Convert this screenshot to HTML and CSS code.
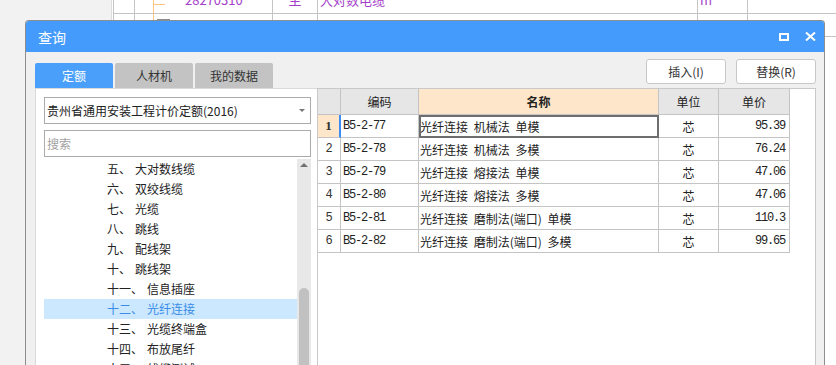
FILE: index.html
```html
<!DOCTYPE html>
<html lang="zh-CN">
<head>
    <meta charset="utf-8">
    <title>查询</title>
    <link rel="stylesheet" href="styles.css">
</head>
<body>
    <!-- 背景：主窗口的清单表格 -->
    <div class="desk">
        <div class="side"></div>
        <div class="sheet">
            <div class="sheet-grid">
                <div class="sc first"></div>
                <div class="sc branch"><span class="line tee"></span><span class="code">28270310</span></div>
                <div class="sc center purple up-row">主</div>
                <div class="sc purple up-row">大对数电缆</div>
                <div class="sc purple up-row">m</div>
                <div class="sc"></div>

                <div class="sc first"></div>
                <div class="sc branch"><span class="line"></span><span class="node"></span></div>
                <div class="sc center low-row">个</div>
                <div class="sc dark low-row">光纤连接盒 安装 壁挂式</div>
                <div class="sc"></div>
                <div class="sc"></div>
            </div>
        </div>
    </div>

    <div class="dialog">
        <div class="titlebar">
            <span class="title">查询</span>
            <div class="ctrls">
                <svg width="10" height="8" viewBox="0 0 10 8"><rect x="1" y="1" width="8" height="6" fill="none" stroke="#fff" stroke-width="2"/></svg>
                <svg width="11" height="9" viewBox="0 0 11 9"><path d="M1 0.5 L10 8.5 M10 0.5 L1 8.5" stroke="#fff" stroke-width="2"/></svg>
            </div>
        </div>

        <div class="dlg-body">
            <div class="toolbar">
                <div class="tabs">
                    <div class="tab active">定额</div>
                    <div class="tab">人材机</div>
                    <div class="tab">我的数据</div>
                </div>
                <div class="actions">
                    <button class="btn">插入(I)</button>
                    <button class="btn">替换(R)</button>
                </div>
            </div>

            <div class="panes">
                <div class="left">
                    <div class="select">
                        <span>贵州省通用安装工程计价定额(2016)</span>
                        <span class="caret"></span>
                    </div>
                    <div class="search">搜索</div>
                    <div class="tree">
                        <ul class="tree-list">
                            <li><span class="num">五、</span>大对数线缆</li>
                            <li><span class="num">六、</span>双绞线缆</li>
                            <li><span class="num">七、</span>光缆</li>
                            <li><span class="num">八、</span>跳线</li>
                            <li><span class="num">九、</span>配线架</li>
                            <li><span class="num">十、</span>跳线架</li>
                            <li><span class="num">十一、</span>信息插座</li>
                            <li class="sel"><span class="num">十二、</span>光纤连接</li>
                            <li><span class="num">十三、</span>光缆终端盒</li>
                            <li><span class="num">十四、</span>布放尾纤</li>
                            <li><span class="num">十五、</span>线缆测试</li>
                        </ul>
                        <div class="scroll">
                            <span class="up"></span>
                            <span class="thumb"></span>
                        </div>
                    </div>
                </div>

                <div class="right">
                    <table class="items">
                        <colgroup>
                            <col class="c-no"><col class="c-code"><col class="c-name"><col class="c-unit"><col class="c-price">
                        </colgroup>
                        <thead>
                            <tr>
                                <th></th>
                                <th>编码</th>
                                <th class="hl">名称</th>
                                <th>单位</th>
                                <th>单价</th>
                            </tr>
                        </thead>
                        <tbody>
                            <tr class="cur">
                                <td class="no">1</td>
                                <td class="code">B5-2-77</td>
                                <td class="name focus">光纤连接 机械法 单模</td>
                                <td class="unit">芯</td>
                                <td class="price">95.39</td>
                            </tr>
                            <tr>
                                <td class="no">2</td>
                                <td class="code">B5-2-78</td>
                                <td class="name">光纤连接 机械法 多模</td>
                                <td class="unit">芯</td>
                                <td class="price">76.24</td>
                            </tr>
                            <tr>
                                <td class="no">3</td>
                                <td class="code">B5-2-79</td>
                                <td class="name">光纤连接 熔接法 单模</td>
                                <td class="unit">芯</td>
                                <td class="price">47.06</td>
                            </tr>
                            <tr>
                                <td class="no">4</td>
                                <td class="code">B5-2-80</td>
                                <td class="name">光纤连接 熔接法 多模</td>
                                <td class="unit">芯</td>
                                <td class="price">47.06</td>
                            </tr>
                            <tr>
                                <td class="no">5</td>
                                <td class="code">B5-2-81</td>
                                <td class="name">光纤连接 磨制法(端口) 单模</td>
                                <td class="unit">芯</td>
                                <td class="price">110.3</td>
                            </tr>
                            <tr>
                                <td class="no">6</td>
                                <td class="code">B5-2-82</td>
                                <td class="name">光纤连接 磨制法(端口) 多模</td>
                                <td class="unit">芯</td>
                                <td class="price">99.65</td>
                            </tr>
                        </tbody>
                    </table>
                </div>
            </div>
        </div>
    </div>
</body>
</html>
```
FILE: styles.css
```css
* {
    box-sizing: border-box;
}

body {
    margin: 0;
    width: 836px;
    height: 365px;
    overflow: hidden;
    position: relative;
    background-color: #ffffff;
    font-family: "Noto Sans CJK SC", sans-serif;
    font-size: 12px;
    color: #222222;
}

/* 背景窗口 */
.desk {
    display: flex;
    height: 365px;
}

.side {
    width: 112px;
    background-color: #f2f2f2;
    border-right: 1px solid #dddddd;
}

.sheet {
    flex: 1;
    overflow: hidden;
    padding-left: 1px;
}

.sheet-grid {
    display: grid;
    grid-template-columns: 22px 138px 45px 380px 50px 200px;
    margin-top: -9px;
}

.sc {
    height: 23px;
    border-right: 1px solid #c4c4c4;
    border-bottom: 1px solid #c4c4c4;
    display: flex;
    align-items: center;
    padding-left: 2px;
    font-size: 13px;
    white-space: nowrap;
    overflow: hidden;
}

.sc.up-row {
    padding-bottom: 6px;
}

.sc.low-row {
    padding-top: 4px;
}

.sc.first {
    border-left: 1px solid #c4c4c4;
}

.sc.center {
    justify-content: center;
    padding-left: 0;
}

.sc.purple,
.sc .code {
    color: #a43fc9;
}

.sc.dark {
    color: #222222;
    padding-left: 15px;
}

.sc.branch {
    padding-left: 18px;
    align-items: stretch;
}

.line {
    width: 12px;
    background: linear-gradient(#ffc580, #ffc580) 0 0 / 1px 100% no-repeat;
}

.line.tee {
    background:
        linear-gradient(#ffc580, #ffc580) 0 0 / 1px 100% no-repeat,
        linear-gradient(#ffc580, #ffc580) 0 13px / 100% 1px no-repeat;
}

.sc .code {
    align-self: center;
    margin: 0 0 6px 20px;
}

.node {
    width: 13px;
    height: 12px;
    margin: 5px 0 0 -8px;
    border: 1px solid #8c8c8c;
    background-color: #b8b8b8;
}

/* 查询对话框 */
.dialog {
    position: absolute;
    left: 25px;
    top: 20px;
    width: 800px;
    height: 345px;
    border: 1px solid #8e8e8e;
    border-bottom: 0;
    border-radius: 4px 4px 0 0;
    background-color: #f0f0f0;
    display: flex;
    flex-direction: column;
    overflow: hidden;
}

.titlebar {
    height: 31px;
    flex-shrink: 0;
    background-color: #459bfc;
    color: #ffffff;
    display: flex;
    align-items: center;
    padding: 0 8px 0 12px;
}

.title {
    font-size: 14px;
}

.ctrls {
    margin-left: auto;
    display: flex;
    align-items: center;
    gap: 16px;
}

.ctrls svg {
    display: block;
}

.dlg-body {
    flex: 1;
    display: flex;
    flex-direction: column;
    padding: 0 8px 0 9px;
    min-height: 0;
}

.toolbar {
    height: 36px;
    flex-shrink: 0;
    display: flex;
    align-items: flex-start;
}

.tabs {
    display: flex;
    align-self: flex-end;
}

.tab {
    width: 78px;
    height: 25px;
    margin-right: 2px;
    display: flex;
    align-items: center;
    justify-content: center;
    border-radius: 2px 2px 0 0;
    background-color: #c3c3c3;
    color: #333333;
    font-size: 12px;
}

.tab.active {
    background-color: #4a9ffa;
    color: #ffffff;
}

.actions {
    margin-left: auto;
    margin-top: 7px;
    display: flex;
    gap: 10px;
}

.btn {
    width: 80px;
    height: 25px;
    padding: 0;
    border: 1px solid #c8c8c8;
    border-radius: 3px;
    background-color: #ffffff;
    color: #333333;
    font-family: "Noto Sans CJK SC", sans-serif;
    font-size: 12px;
}

.panes {
    flex: 1;
    display: flex;
    min-height: 0;
}

/* 左侧定额章节树 */
.left {
    width: 282px;
    background-color: #ffffff;
    border-top: 1px solid #d9d9d9;
    border-left: 1px solid #d9d9d9;
    padding: 8px 6px 0 8px;
    display: flex;
    flex-direction: column;
    min-height: 0;
}

.select,
.search {
    height: 27px;
    flex-shrink: 0;
    border: 1px solid #ababab;
    display: flex;
    align-items: center;
    padding: 0 2px;
}

.caret {
    margin-left: auto;
    margin-right: 3px;
    border-left: 3px solid transparent;
    border-right: 3px solid transparent;
    border-top: 3px solid #777777;
}

.search {
    margin-top: 6px;
    color: #a2a2a2;
}

.tree {
    flex: 1;
    margin-top: 2px;
    display: flex;
    min-height: 0;
    overflow: hidden;
}

.tree-list {
    flex: 1;
    list-style: none;
    margin: 0;
    padding: 0;
}

.tree-list li {
    height: 20px;
    line-height: 20px;
    padding-left: 63px;
    white-space: nowrap;
    color: #222222;
}

.tree-list .num {
    margin-right: 4px;
}

.tree-list li.sel {
    background-color: #cce8ff;
    color: #3a8de8;
}

.scroll {
    width: 14px;
    background-color: #e8e8e8;
    display: flex;
    flex-direction: column;
    align-items: center;
}

.up {
    margin-top: 4px;
    border-left: 4px solid transparent;
    border-right: 4px solid transparent;
    border-bottom: 4px solid #707070;
}

.thumb {
    width: 10px;
    height: 100px;
    flex-shrink: 0;
    margin-top: 121px;
    border-radius: 5px 5px 0 0;
    background-color: #c1c1c1;
}

/* 右侧定额子目表 */
.right {
    width: 499px;
    background-color: #ffffff;
    border: 1px solid #c9c9c9;
    border-bottom: 0;
}

.items {
    border-collapse: separate;
    border-spacing: 0;
    table-layout: fixed;
    width: 472px;
}

.c-no { width: 23px; }
.c-code { width: 78px; }
.c-name { width: 240px; }
.c-unit { width: 60px; }
.c-price { width: 71px; }

.items th,
.items td {
    padding: 0;
    border-right: 1px solid #c4c4c4;
    border-bottom: 1px solid #c4c4c4;
    white-space: nowrap;
    overflow: hidden;
}

.items th {
    height: 26px;
    background-color: #e6e6e6;
    font-weight: normal;
    color: #222222;
}

.items th.hl {
    background-color: #fde6c9;
    font-weight: 700;
}

.items td {
    height: 23px;
}

.items td.no {
    text-align: center;
    font-family: "Liberation Mono", monospace;
    font-size: 12px;
    color: #333333;
}

.items tr.cur td.no {
    background-color: #fde6c9;
    border-right: 2px solid #3b8df5;
    font-family: "Liberation Serif", serif;
    font-size: 13px;
    font-weight: 700;
}

.items td.code,
.items td.price {
    font-family: "Liberation Mono", monospace;
    font-size: 12px;
    letter-spacing: -1.2px;
}

.items td.code {
    padding-left: 2px;
}

.items td.price {
    text-align: right;
    padding-right: 4px;
}

.items td.name {
    padding-left: 1px;
    word-spacing: 3px;
}

.items td.name.focus {
    outline: 2px solid #6e6e6e;
    outline-offset: -2px;
}

.items td.unit {
    text-align: center;
}
```
